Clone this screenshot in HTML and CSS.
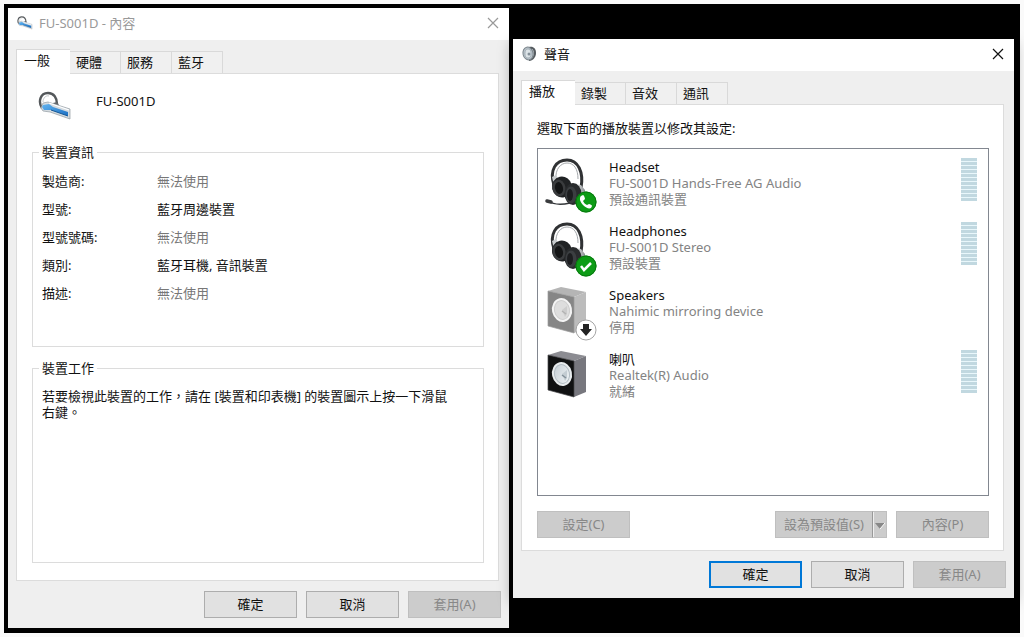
FILE: index.html
```html
<!DOCTYPE html>
<html lang="zh-Hant">
<head>
<meta charset="utf-8">
<meta name="viewport" content="width=device-width, initial-scale=1">
<title>FU-S001D - 內容</title>
<link rel="stylesheet" href="styles.css">
</head>
<body>
<svg class="defs" aria-hidden="true">
  <defs>
    <linearGradient id="blue" x1="0" y1="0" x2="1" y2="1"><stop offset="0" stop-color="#62b4f0"/><stop offset="1" stop-color="#1b6fc4"/></linearGradient>
    <linearGradient id="cone" x1="0" y1="0" x2="1" y2="1"><stop offset="0" stop-color="#c3ccd3"/><stop offset="1" stop-color="#f1f5f7"/></linearGradient>
    <linearGradient id="metal" x1="0" y1="0" x2="1" y2="0"><stop offset="0" stop-color="#fafafa"/><stop offset="1" stop-color="#888d91"/></linearGradient>
    <symbol id="bluetooth-headset" viewBox="0 0 34 32">
      <path d="M4 18C0 12 2 3 10 3c6 0 9 5 9 11" fill="none" stroke="#54585b" stroke-width="2.4"/>
      <path d="M5 12c0-4 3-7 6-6" fill="none" stroke="#c5c9cc" stroke-width="1"/>
      <path d="M15 13l4-1 2 3-3 3z" fill="#62676b"/>
      <path d="M5 13l5-1 22 7v10L12 22l-7-1-2-3z" fill="#d4dbe0" stroke="#929ba2" stroke-width=".7"/>
      <path d="M5 15l6-1 4 3 15 5v4l-17-6-7 0-2-3z" fill="url(#blue)"/>
      <path d="M13 20l17 6" stroke="#145796" stroke-width="1"/>
      <path d="M11 13l20 7" stroke="#fff" stroke-width="1.2"/>
    </symbol>
    <symbol id="headphones" viewBox="0 0 54 58">
      <path d="M10 28C5 13 12 3 23 3c11 0 17 12 14 28" fill="none" stroke="#303234" stroke-width="3"/>
      <path d="M12 22C11 12 17 6 23 6c7 0 11 6 11 16" fill="none" stroke="#999da0" stroke-width=".9"/>
      <path d="M8 20l4-2 3 5-5 5z" fill="#c8ccce"/>
      <ellipse cx="18" cy="30" rx="10" ry="10.5" transform="rotate(-12 18 30)" fill="#202224"/>
      <ellipse cx="15" cy="31" rx="6.5" ry="8.500" transform="rotate(-12 15 31)" fill="#3a3c3e"/>
      <ellipse cx="15" cy="31" rx="4" ry="6" transform="rotate(-12 15 31)" fill="#141516"/>
      <path d="M31 27l6 1 4 5v12l-8 3z" fill="url(#metal)"/>
      <ellipse cx="29" cy="37" rx="8.500" ry="11" fill="#292b2d"/>
      <ellipse cx="27" cy="38" rx="5.500" ry="8.500" fill="#3b3e41"/>
      <ellipse cx="26" cy="38" rx="3" ry="6" fill="#1c1d1f"/>
    </symbol>
    <symbol id="speaker-dark" viewBox="0 0 54 58">
      <path d="M4 6l13-4 25 5-12 5z" fill="#8c8c92"/>
      <path d="M30 12l12-5v36l-12 5z" fill="#77777e"/>
      <path d="M4 6l26 6v36L4 41z" fill="#101112" stroke="#48484b" stroke-width=".7"/>
      <ellipse cx="18" cy="25" rx="10" ry="12" transform="rotate(-12 18 25)" fill="#e7ebed"/>
      <ellipse cx="18" cy="25" rx="7.500" ry="9.500" transform="rotate(-12 18 25)" fill="url(#cone)" stroke="#b3bdc4"/>
      <path d="M18 25l5-4v8l-2 3z" fill="#c3ccd2"/><path d="M18 26l4 3" stroke="#84919a" stroke-width="1.5"/>
    </symbol>
    <symbol id="speaker-light" viewBox="0 0 54 58">
      <path d="M4 6l13-4 25 5-12 5z" fill="#b5b5b5"/>
      <path d="M30 12l12-5v36l-12 5z" fill="#bcbcbc"/>
      <path d="M4 6l26 6v36L4 41z" fill="#868686" stroke="#9c9c9c" stroke-width=".7"/>
      <ellipse cx="18" cy="25" rx="10" ry="12" transform="rotate(-12 18 25)" fill="#f4f4f4"/>
      <ellipse cx="18" cy="25" rx="7.500" ry="9.500" transform="rotate(-12 18 25)" fill="#dedede" stroke="#cfcfcf"/>
      <path d="M18 25l5-4v8l-2 3z" fill="#cdcdcd"/><path d="M18 26l4 3" stroke="#b3b3b3" stroke-width="1.5"/>
    </symbol>
    <symbol id="close" viewBox="0 0 12 12"><path d="M1 1l10 10M11 1L1 11" fill="none" stroke="currentColor" stroke-width="1.2"/></symbol>
  </defs>
</svg>
<main class="desktop">
  <section class="window properties" aria-labelledby="props-title">
    <header class="titlebar inactive">
      <svg class="title-icon"><use href="#bluetooth-headset"/></svg>
      <h1 class="title" id="props-title">FU-S001D - 內容</h1>
      <button class="close" type="button" aria-label="關閉"><svg><use href="#close"/></svg></button>
    </header>
    <div class="window-body">
      <div class="tabs" role="tablist">
        <button class="tab selected" type="button" role="tab" aria-selected="true">一般</button>
        <button class="tab" type="button" role="tab" aria-selected="false">硬體</button>
        <button class="tab" type="button" role="tab" aria-selected="false">服務</button>
        <button class="tab" type="button" role="tab" aria-selected="false">藍牙</button>
      </div>
      <div class="panel general" role="tabpanel">
        <div class="device"><svg class="device-icon"><use href="#bluetooth-headset"/></svg><span>FU-S001D</span></div>
        <fieldset class="group">
          <legend>裝置資訊</legend>
          <dl class="facts">
            <dt>製造商:</dt><dd class="muted">無法使用</dd>
            <dt>型號:</dt><dd>藍牙周邊裝置</dd>
            <dt>型號號碼:</dt><dd class="muted">無法使用</dd>
            <dt>類別:</dt><dd>藍牙耳機, 音訊裝置</dd>
            <dt>描述:</dt><dd class="muted">無法使用</dd>
          </dl>
        </fieldset>
        <fieldset class="group">
          <legend>裝置工作</legend>
          <p class="hint">若要檢視此裝置的工作，請在 [裝置和印表機] 的裝置圖示上按一下滑鼠右鍵。</p>
        </fieldset>
      </div>
      <footer class="actions">
        <button class="btn" type="button">確定</button>
        <button class="btn" type="button">取消</button>
        <button class="btn" type="button" disabled>套用(A)</button>
      </footer>
    </div>
  </section>

  <section class="window sound" aria-labelledby="sound-title">
    <header class="titlebar">
      <svg class="title-icon" viewBox="0 0 16 16">
        <path d="M7 1c4-1 7 1 7 6 0 4-3 8-7 8z" fill="#555b5f"/>
        <path d="M10 3c2 2 2 7-1 10" fill="none" stroke="#bcc3c8"/>
        <ellipse cx="6" cy="7.500" rx="5" ry="6.500" transform="rotate(-12 6 7.500)" fill="#b9c3ca" stroke="#7c868d"/>
        <ellipse cx="6" cy="7.500" rx="3" ry="4.500" fill="#dce3e7" stroke="#96a2aa" stroke-width=".7"/>
        <circle cx="7" cy="8" r="1.500" fill="#849099"/>
      </svg>
      <h1 class="title" id="sound-title">聲音</h1>
      <button class="close" type="button" aria-label="關閉"><svg><use href="#close"/></svg></button>
    </header>
    <div class="window-body">
      <div class="tabs" role="tablist">
        <button class="tab selected" type="button" role="tab" aria-selected="true">播放</button>
        <button class="tab" type="button" role="tab" aria-selected="false">錄製</button>
        <button class="tab" type="button" role="tab" aria-selected="false">音效</button>
        <button class="tab" type="button" role="tab" aria-selected="false">通訊</button>
      </div>
      <div class="panel playback" role="tabpanel">
        <p class="prompt" id="prompt">選取下面的播放裝置以修改其設定:</p>
        <ul class="endpoints" aria-labelledby="prompt">
          <li class="endpoint">
            <svg class="endpoint-icon" viewBox="0 0 54 58">
              <use href="#headphones" width="54" height="58"/>
              <path d="M4 44c6 4 13 4 22 2" fill="none" stroke="#34373a" stroke-width="1.500"/><path d="M3 44l4 1" stroke="#3a3c3e" stroke-width="3.500" stroke-linecap="round"/>
              <circle cx="42" cy="45" r="10.500" fill="#0d9c16"/><circle cx="42" cy="45" r="10" fill="none" stroke="#08780f"/>
              <path d="M37 39l2-1c1 0 2 3 2 4l-2 2c1 2 2 3 4 4l2-1c1 0 3 1 3 2l-1 2c-2 1-5 0-8-3s-4-7-2-9z" fill="#fff"/>
            </svg>
            <div class="endpoint-text"><span class="name">Headset</span><span>FU-S001D Hands-Free AG Audio</span><span>預設通訊裝置</span></div>
            <span class="level"></span>
          </li>
          <li class="endpoint">
            <svg class="endpoint-icon" viewBox="0 0 54 58">
              <use href="#headphones" width="54" height="58"/>
              <circle cx="42" cy="45" r="10.500" fill="#0d9c16"/><circle cx="42" cy="45" r="10" fill="none" stroke="#08780f"/>
              <path d="M37 45l3 4 7-7" fill="none" stroke="#fff" stroke-width="2.500"/>
            </svg>
            <div class="endpoint-text"><span class="name">Headphones</span><span>FU-S001D Stereo</span><span>預設裝置</span></div>
            <span class="level"></span>
          </li>
          <li class="endpoint">
            <svg class="endpoint-icon" viewBox="0 0 54 58">
              <use href="#speaker-light" width="54" height="58"/>
              <circle cx="42" cy="45" r="10" fill="#fff" stroke="#a5a5a5"/>
              <path d="M39 39h6v5h3l-6 7-6-7h3z" fill="#222"/>
            </svg>
            <div class="endpoint-text"><span class="name">Speakers</span><span>Nahimic mirroring device</span><span>停用</span></div>
          </li>
          <li class="endpoint">
            <svg class="endpoint-icon" viewBox="0 0 54 58"><use href="#speaker-dark" width="54" height="58"/></svg>
            <div class="endpoint-text"><span class="name">喇叭</span><span>Realtek(R) Audio</span><span>就緒</span></div>
            <span class="level"></span>
          </li>
        </ul>
        <div class="tools">
          <button class="btn configure" type="button" disabled>設定(C)</button>
          <div class="split">
            <button class="btn split-main" type="button" disabled>設為預設值(S)</button>
            <button class="btn split-menu" type="button" disabled aria-label="更多預設選項"><svg viewBox="0 0 10 6"><path d="M0 0h10L5 6z" fill="#888"/><path d="M10 0L5 6" stroke="#fff"/></svg></button>
          </div>
          <button class="btn" type="button" disabled>內容(P)</button>
        </div>
      </div>
      <footer class="actions">
        <button class="btn primary" type="button">確定</button>
        <button class="btn" type="button">取消</button>
        <button class="btn" type="button" disabled>套用(A)</button>
      </footer>
    </div>
  </section>
</main>
</body>
</html>
```
FILE: styles.css
```css
* { box-sizing: border-box; }

body {
  margin: 0;
  padding: 4px;
  min-height: 100vh;
  display: flex;
  background: #fafafa;
  color: #111;
  font: 13px/16px "Noto Sans", "Noto Sans CJK TC", sans-serif;
}

button { font: inherit; color: inherit; }
.defs { position: absolute; width: 0; height: 0; }

.desktop {
  flex: 1;
  display: flex;
  gap: 4px;
  padding: 4px 6px 5px 4px;
  background: #000;
}

.window {
  flex: 1 1 0;
  min-width: 0;
  display: flex;
  flex-direction: column;
  background: #efefef;
}

.sound {
  margin: 31px 0 30px;
  box-shadow: 0 4px 14px rgba(0, 0, 0, 0.4);
}

.titlebar {
  display: flex;
  align-items: center;
  gap: 6px;
  height: 32px;
  padding: 0 10px 2px 9px;
  background: #fff;
}

.title { flex: 1; margin: 0; font-size: 13px; font-weight: 400; }
.title-icon { width: 16px; height: 16px; }
.inactive .title { color: #999; }
.inactive .close { color: #999; }

.close {
  display: flex;
  padding: 0;
  border: 0;
  background: none;
}
.close svg { width: 12px; height: 12px; }

.window-body {
  flex: 1;
  display: flex;
  flex-direction: column;
  padding: 9px 8px 10px;
}

.tabs { display: flex; align-items: flex-end; }

.tab {
  height: 22px;
  padding: 0 18px 2px 6px;
  border: 1px solid #d9d9d9;
  border-width: 1px 1px 0 0;
  background: #f0f0f0;
}

.tab.selected {
  position: relative;
  height: 25px;
  margin-bottom: -1px;
  padding: 0 20px 4px 7px;
  border-width: 1px 0 0 1px;
  background: #fff;
}

.panel {
  flex: 1;
  display: flex;
  flex-direction: column;
  margin-right: 2px;
  border: 1px solid #dcdcdc;
  background: #fff;
}

.general { padding: 16px 14px 17px 15px; }

.device {
  display: flex;
  gap: 24px;
  height: 54px;
  padding-left: 6px;
}
.device span { padding-top: 3px; }
.device-icon { width: 34px; height: 32px; }

.group {
  flex: 1 1 0;
  min-width: 0;
  margin: 0;
  padding: 0 9px;
  border: 1px solid #dcdcdc;
}
.group + .group { margin-top: 13px; }
.group legend { margin-left: -3px; padding: 0 3px; }

.facts {
  display: grid;
  grid-template-columns: 115px 1fr;
  gap: 12px 0;
  margin: 13px 0 0;
}
.facts dd { margin: 0; }
.muted { color: #777; }
.hint { margin: 12px 20px 0 0; }

.actions {
  display: flex;
  justify-content: flex-end;
  gap: 9px;
  padding-top: 10px;
}

.btn {
  width: 93px;
  height: 27px;
  padding: 0 0 2px;
  border: 1px solid #adadad;
  background: #e1e1e1;
}
.btn:disabled {
  border-color: #bfbfbf;
  background: #ccc;
  color: #888;
}
.btn.primary { border: 2px solid #0078d7; }

.playback { padding: 15px 14px 12px 15px; }
.prompt { margin: 0 0 12px; }

.endpoints {
  flex: 1;
  display: flex;
  flex-direction: column;
  gap: 6px;
  margin: 0;
  padding: 8px 11px 7px 6px;
  border: 1px solid #828790;
  list-style: none;
}

.endpoint {
  display: flex;
  gap: 11px;
}
.endpoint-icon { width: 54px; height: 58px; }
.endpoint-text {
  flex: 1;
  display: flex;
  flex-direction: column;
  padding-top: 2px;
  color: #838383;
}
.name { color: #111; }

.level {
  width: 16px;
  height: 43px;
  margin-top: 1px;
  background: repeating-linear-gradient(#c1d8e0 0 3px, #e9f7fb 3px 4px);
}

.tools { display: flex; gap: 9px; padding-top: 15px; }
.configure { margin-right: auto; }
.split { display: flex; }
.split .btn { border-right: 0; }
.split .split-main { width: 97px; }
.split .split-menu {
  width: 15px;
  border-left-color: #999;
  border-right: 1px solid #bfbfbf;
  box-shadow: inset 1px 0 #eee;
}
.split-menu svg { width: 10px; height: 6px; }
```
